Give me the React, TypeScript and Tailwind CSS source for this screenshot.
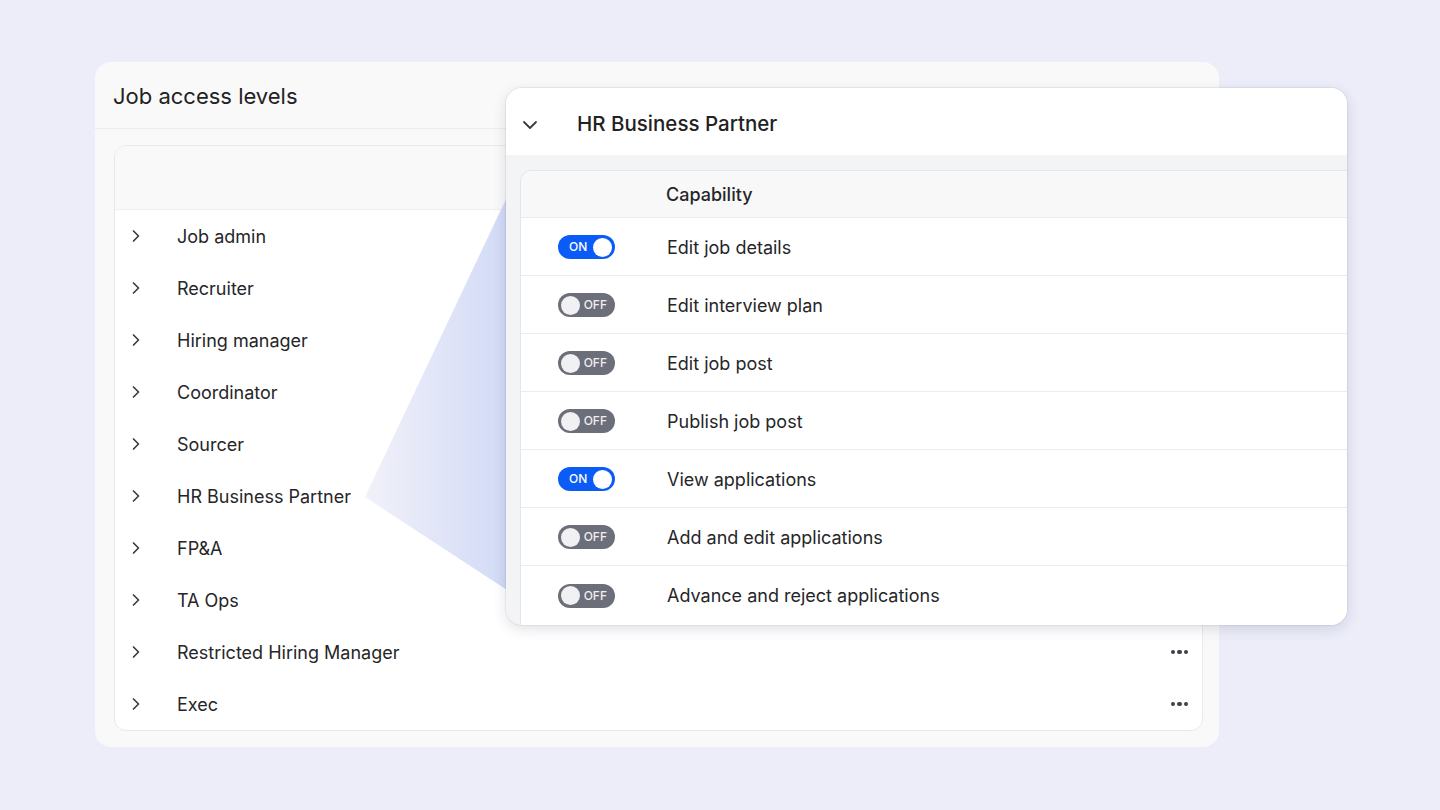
import { ChevronRight, ChevronDown } from "lucide-react";

const roles = [
  "Job admin",
  "Recruiter",
  "Hiring manager",
  "Coordinator",
  "Sourcer",
  "HR Business Partner",
  "FP&A",
  "TA Ops",
  "Restricted Hiring Manager",
  "Exec",
];

const capabilities = [
  { name: "Edit job details", on: true },
  { name: "Edit interview plan", on: false },
  { name: "Edit job post", on: false },
  { name: "Publish job post", on: false },
  { name: "View applications", on: true },
  { name: "Add and edit applications", on: false },
  { name: "Advance and reject applications", on: false },
];

function Dots() {
  return (
    <div className="flex items-center gap-[2px]">
      <span className="w-[4.5px] h-[4.5px] rounded-full bg-[#3f404a]" />
      <span className="w-[4.5px] h-[4.5px] rounded-full bg-[#3f404a]" />
      <span className="w-[4.5px] h-[4.5px] rounded-full bg-[#3f404a]" />
    </div>
  );
}

function Toggle({ on }: { on: boolean }) {
  if (on) {
    return (
      <div className="w-[57px] h-[24px] rounded-full bg-[#0b5cf6] flex items-center justify-between pl-[11px] pr-[3px]">
        <span className="text-[12px] font-medium text-white leading-none">ON</span>
        <span className="w-[19px] h-[19px] rounded-full bg-white" />
      </div>
    );
  }
  return (
    <div className="w-[57px] h-[24px] rounded-full bg-[#6c6e79] flex items-center justify-between pl-[3px] pr-[8px]">
      <span className="w-[19px] h-[19px] rounded-full bg-[#f1f1f4]" />
      <span className="text-[12px] font-medium text-[#eeeef2] leading-none">OFF</span>
    </div>
  );
}

export default function App() {
  return (
    <div
      className="w-[1440px] h-[810px] bg-[#ecedf9] pt-[62px] pl-[95px] text-[#262629]"
      style={{ fontFamily: "Inter, 'Noto Sans', sans-serif" }}
    >
      <div className="relative w-[1124px] h-[685px] rounded-[16px] bg-[#f9f9f9] flex flex-col">
        <div className="h-[67px] shrink-0 border-b border-[#ececee] flex items-center px-[18px] pt-[3px]">
          <h1 className="text-[22px] text-[#222]">Job access levels</h1>
        </div>

        <div className="flex-1 pt-[16px] pl-[19px] pr-[16px] pb-[16px]">
          <div className="h-full rounded-[12px] border border-[#e9e9ec] bg-white overflow-hidden flex flex-col">
            <div className="h-[64px] shrink-0 bg-[#f9f9f9] border-b border-[#efeff1]" />
            {roles.map((r) => (
              <div key={r} className="h-[52px] shrink-0 flex items-center pl-[11px] pr-[14px]">
                <ChevronRight className="w-[20px] h-[20px] text-[#3a3a40]" strokeWidth={2} />
                <span className="ml-[31px] text-[18px] flex-1">{r}</span>
                <Dots />
              </div>
            ))}
          </div>
        </div>

        {/* connector wedge */}
        <svg
          className="absolute left-0 top-0 pointer-events-none"
          width="420"
          height="540"
          viewBox="0 0 420 540"
        >
          <defs>
            <linearGradient id="wedge" x1="270" y1="0" x2="412" y2="0" gradientUnits="userSpaceOnUse">
              <stop offset="0" stopColor="#f1f1f9" />
              <stop offset="1" stopColor="#d2daf6" />
            </linearGradient>
          </defs>
          <polygon points="270,435 412,135 412,528" fill="url(#wedge)" />
        </svg>

        {/* expanded role card */}
        <div className="absolute left-[411px] top-[26px] w-[841px] h-[537px] rounded-[16px] bg-[#f3f4f6] overflow-hidden flex flex-col shadow-[0_0_0_1px_rgba(0,0,0,0.05),0_4px_14px_rgba(40,40,80,0.14)]">
          <div className="h-[67px] shrink-0 bg-white flex items-center pl-[12px] pt-[6px]">
            <ChevronDown className="w-[24px] h-[24px] text-[#3a3a40]" strokeWidth={1.8} />
            <span className="ml-[35px] text-[20.5px] font-medium text-[#222]">HR Business Partner</span>
          </div>
          <div className="flex-1 pt-[15px] pl-[14px]">
            <div className="h-full bg-white rounded-tl-[12px] border-l border-t border-[#e6e6ea] flex flex-col">
              <div className="h-[47px] shrink-0 bg-[#f8f8f9] border-b border-[#ececef] flex items-center pl-[145px] rounded-tl-[12px]">
                <span className="text-[18px] font-medium">Capability</span>
              </div>
              {capabilities.map((c, i) => (
                <div
                  key={c.name}
                  className={
                    "h-[58px] shrink-0 flex items-center pl-[37px] pt-[1px] " +
                    (i < capabilities.length - 1 ? "border-b border-[#ececef]" : "")
                  }
                >
                  <Toggle on={c.on} />
                  <span className="ml-[52px] text-[18px]">{c.name}</span>
                </div>
              ))}
            </div>
          </div>
        </div>
      </div>
    </div>
  );
}
